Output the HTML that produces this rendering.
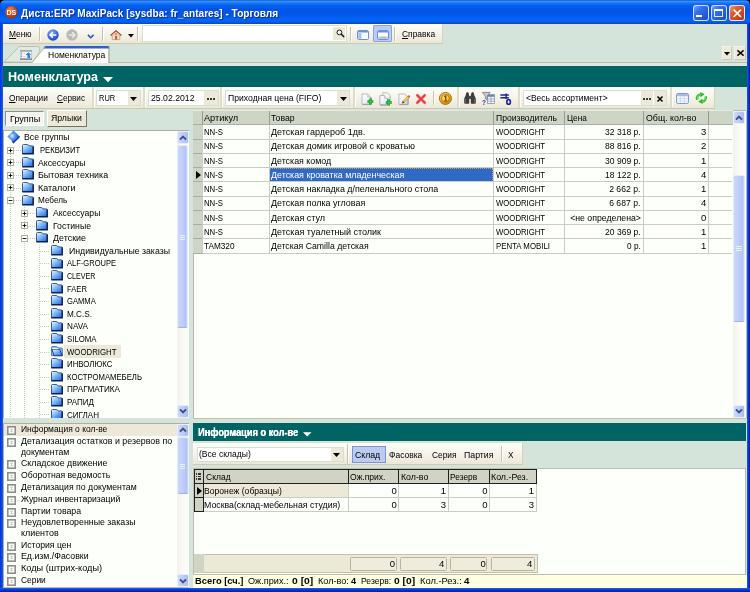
<!DOCTYPE html>
<html><head><meta charset="utf-8"><title>Диста:ERP MaxiPack</title><style>
html,body{margin:0;padding:0;}
body{width:750px;height:592px;overflow:hidden;position:relative;background:#d5e4da;font-family:"Liberation Sans",sans-serif;}
.a{position:absolute;box-sizing:border-box;}
.t{white-space:nowrap;line-height:1.15;}
svg{position:absolute;overflow:visible;}
#root{position:absolute;left:0;top:0;width:750px;height:592px;will-change:transform;}
</style></head><body>
<div id="root">
<svg width="0" height="0" style="left:0;top:0"><defs>
<radialGradient id="og" cx="40%" cy="30%" r="70%"><stop offset="0" stop-color="#f08848"/><stop offset="0.55" stop-color="#d04c18"/><stop offset="1" stop-color="#a02c06"/></radialGradient>
<radialGradient id="bg1" cx="40%" cy="30%" r="75%"><stop offset="0" stop-color="#8eb0f6"/><stop offset="0.7" stop-color="#2f5fd8"/><stop offset="1" stop-color="#1d46b8"/></radialGradient>
<radialGradient id="cg" cx="40%" cy="35%" r="70%"><stop offset="0" stop-color="#ffe680"/><stop offset="0.7" stop-color="#f0b020"/><stop offset="1" stop-color="#c88408"/></radialGradient>
<linearGradient id="fg" x1="0" y1="0" x2="0.9" y2="1"><stop offset="0" stop-color="#f4faff"/><stop offset="0.3" stop-color="#a8d2fd"/><stop offset="0.65" stop-color="#5a9cf2"/><stop offset="1" stop-color="#2a68d8"/></linearGradient>
<radialGradient id="dg" cx="38%" cy="45%" r="60%"><stop offset="0" stop-color="#e4f0ff"/><stop offset="0.35" stop-color="#6aa4f8"/><stop offset="0.75" stop-color="#2c6cec"/><stop offset="1" stop-color="#1c4cd0"/></radialGradient>
</defs></svg>
<div class="a" style="left:0px;top:0px;width:750px;height:8px;background:#000;"></div>
<div class="a" style="left:0px;top:0px;width:750px;height:24px;background:linear-gradient(#0a57d8 0%,#3a90fb 6%,#1a78f8 12%,#0462ee 22%,#0255e4 40%,#0257ea 60%,#0462f6 78%,#0563f4 88%,#0353d8 96%,#0347c0 100%);border-radius:5px 5px 0 0;"></div>
<div class="a" style="left:0px;top:23px;width:3px;height:565.5px;background:linear-gradient(90deg,#0831d9,#0a4be6 60%,#1660ee);"></div>
<div class="a" style="left:747px;top:23px;width:3px;height:565.5px;background:linear-gradient(90deg,#1a5aec,#0a3ee0 40%,#0526c4 75%,#001ea0);"></div>
<div class="a" style="left:0px;top:588.3px;width:750px;height:3.7px;background:linear-gradient(#2464f0,#0a3ee0 35%,#0526c4 80%,#001ea0);"></div>
<svg style="left:4.9px;top:6.3px" width="12.7" height="12.7" viewBox="0 0 13 13"><circle cx="6.5" cy="6.5" r="6.4" fill="url(#og)"/><text x="6.5" y="9.1" font-family="Liberation Sans" font-weight="bold" font-size="7.2" fill="#fff" text-anchor="middle">DS</text></svg>
<div class="a t" style="left:20.5px;top:7.4px;font-size:10.6px;color:#fff;font-weight:bold;text-shadow:1px 1px 1px #0a2a8a;transform:scaleX(0.953);transform-origin:0 0;">Диста:ERP MaxiPack [sysdba: fr_antares] - Торговля</div>
<div class="a" style="left:692.5px;top:5px;width:16.5px;height:16px;background:linear-gradient(135deg,#7aa4f8 0%,#3a72ee 30%,#2860e4 60%,#1c4cd0 100%);border:1px solid rgba(255,255,255,0.8);border-radius:3px;"></div>
<div class="a" style="left:696.3px;top:15px;width:6px;height:2.3px;background:#fff;"></div>
<div class="a" style="left:710.5px;top:5px;width:16.5px;height:16px;background:linear-gradient(135deg,#7aa4f8 0%,#3a72ee 30%,#2860e4 60%,#1c4cd0 100%);border:1px solid rgba(255,255,255,0.8);border-radius:3px;"></div>
<div class="a" style="left:714.3px;top:9px;width:9px;height:8.4px;border:1px solid rgba(255,255,255,0.85);border-top:2.4px solid #fff;"></div>
<div class="a" style="left:728.5px;top:5px;width:16.5px;height:16px;background:linear-gradient(135deg,#f0a088 0%,#e0603a 30%,#d24a20 60%,#b83510 100%);border:1px solid rgba(255,255,255,0.8);border-radius:3px;"></div>
<svg style="left:732.6px;top:8.9px" width="8.6" height="8.6" viewBox="0 0 8.6 8.6"><path d="M0.6 0.6L8 8M8 0.6L0.6 8" stroke="#fff" stroke-width="1.6"/></svg>
<div class="a" style="left:3px;top:24px;width:439.7px;height:20px;background:linear-gradient(#fdfdf9 0%,#f6f4ea 50%,#ebe8d7 100%);border-bottom:1px solid #cfc9ae;border-right:1px solid #d8d2bc;"></div>
<div class="a t" style="left:9px;top:29.1px;font-size:9.5px;transform:scaleX(0.880);transform-origin:0 0;"><u>М</u>еню</div>
<div class="a" style="left:39px;top:27px;width:1px;height:14px;background:#c5c2b0;"></div>
<div class="a" style="left:40px;top:27px;width:1px;height:14px;background:#fff;"></div>
<svg style="left:46.8px;top:29px" width="12" height="12" viewBox="0 0 12 12"><circle cx="6" cy="6" r="5.7" fill="url(#bg1)"/><path d="M9.3 6H3.4M5.8 3.3L3.1 6L5.8 8.7" stroke="#fff" stroke-width="1.6" fill="none"/></svg>
<svg style="left:65.6px;top:29px" width="12" height="12" viewBox="0 0 12 12"><circle cx="6" cy="6" r="5.7" fill="#b9b9b6"/><path d="M2.7 6H8.6M6.2 3.3L8.9 6L6.2 8.7" stroke="#e8e8e4" stroke-width="1.6" fill="none"/></svg>
<svg style="left:86.6px;top:33.6px" width="8" height="5" viewBox="0 0 8 5"><path d="M0.9 0.9L3.7 3.7L6.5 0.9" stroke="#2c50c8" stroke-width="1.6" fill="none"/></svg>
<div class="a" style="left:102px;top:27px;width:1px;height:14px;background:#c5c2b0;"></div>
<div class="a" style="left:103px;top:27px;width:1px;height:14px;background:#fff;"></div>
<svg style="left:109.6px;top:30px" width="12" height="10" viewBox="0 0 12 10"><path d="M2.2 4.6H9.8V9.6H2.2Z" fill="#f2dcc4" stroke="#b08868" stroke-width="0.6"/><path d="M0.6 5.4L6 0.7L11.4 5.4" fill="#e4c09c" stroke="#8c5434" stroke-width="1.3" stroke-linejoin="round"/><path d="M2 4.9L6 1.6L10 4.9Z" fill="#ecd0b0"/><rect x="5" y="6" width="2.2" height="3.6" fill="#d0602c"/><rect x="5.3" y="3.2" width="1.4" height="1.6" fill="#a87858"/></svg>
<svg style="left:128px;top:34.2px" width="6" height="3.4" viewBox="0 0 6 3.4"><path d="M0 0H6L3 3.4Z" fill="#000"/></svg>
<div class="a" style="left:137px;top:27px;width:1px;height:14px;background:#c5c2b0;"></div>
<div class="a" style="left:138px;top:27px;width:1px;height:14px;background:#fff;"></div>
<div class="a" style="left:141.6px;top:25.2px;width:205.8px;height:16.4px;background:#fff;border:1.6px solid #d4e1d7;"></div>
<div class="a" style="left:333.2px;top:26.9px;width:12.3px;height:13px;background:#ece9d8;"></div>
<svg style="left:335.6px;top:29.3px" width="10" height="10" viewBox="0 0 10 10"><circle cx="3.4" cy="3.4" r="2.4" fill="#f4f5f0" stroke="#1a1a1a" stroke-width="1"/><path d="M5.3 5.3L7.8 7.6" stroke="#1a1a1a" stroke-width="1.5" stroke-linecap="round"/></svg>
<div class="a" style="left:350px;top:27px;width:1px;height:14px;background:#c5c2b0;"></div>
<div class="a" style="left:351px;top:27px;width:1px;height:14px;background:#fff;"></div>
<svg style="left:357px;top:29.5px" width="12" height="10" viewBox="0 0 12 10"><rect x="0.5" y="0.5" width="11" height="9" rx="1.2" fill="#fafcff" stroke="#6c90d8" stroke-width="1"/><path d="M1 2.4V1.6Q1 1 1.6 1H10.4Q11 1 11 1.6V2.4Z" fill="#5c94e4"/><rect x="1" y="2.4" width="3.6" height="6.6" fill="#c4d8f8"/><path d="M1.6 4H4M1.6 5.8H4M1.6 7.6H4" stroke="#7c9cd0" stroke-width="0.7"/></svg>
<div class="a" style="left:372.8px;top:25.3px;width:19px;height:17px;background:#bccbf2;border:1px solid #8aa4e0;border-radius:1px;"></div>
<svg style="left:376.6px;top:29.5px" width="12" height="10" viewBox="0 0 12 10"><rect x="0.5" y="0.5" width="11" height="9" rx="1.2" fill="#fafcff" stroke="#6c90d8" stroke-width="1"/><path d="M1 2.4V1.6Q1 1 1.6 1H10.4Q11 1 11 1.6V2.4Z" fill="#5c94e4"/><rect x="1" y="6.4" width="10" height="2.6" fill="#ccd0d8"/><path d="M3 7.7H9" stroke="#9aa0ac" stroke-width="0.7"/></svg>
<div class="a" style="left:394px;top:27px;width:1px;height:14px;background:#c5c2b0;"></div>
<div class="a" style="left:395px;top:27px;width:1px;height:14px;background:#fff;"></div>
<div class="a t" style="left:402.1px;top:29.1px;font-size:9.5px;transform:scaleX(0.887);transform-origin:0 0;"><u>С</u>правка</div>
<div class="a" style="left:3px;top:61.9px;width:744px;height:0.9px;background:#bfbbaa;"></div>
<div class="a" style="left:3px;top:63px;width:744px;height:3px;background:#dce9e0;"></div>
<svg style="left:4px;top:46px" width="40" height="17" viewBox="0 0 40 17"><path d="M0 16.1L14.6 1.3Q15.4 0.5 16.5 0.5H33.5Q35.7 0.5 35.7 2.7V6L28.3 16.1Z" fill="#dfeae2" stroke="#b6b29e" stroke-width="0.8"/></svg>
<svg style="left:20px;top:50px" width="12" height="10" viewBox="0 0 12 10"><rect x="0.3" y="0.3" width="11.4" height="9.4" fill="#f6f6f6" stroke="#b4b4b4" stroke-width="0.6"/><rect x="0" y="0" width="12" height="1.7" fill="#a6a6a6"/><rect x="0" y="8.3" width="12" height="1.7" fill="#8c8c8c"/><circle cx="1.6" cy="3" r="0.65" fill="#40b850"/><circle cx="1.6" cy="4.8" r="0.65" fill="#e06060"/><circle cx="1.6" cy="6.6" r="0.65" fill="#4888f0"/><path d="M3.4 3.2H5.4M3.4 6.6H5.4" stroke="#c0c0c0" stroke-width="0.7"/><path d="M5.6 4.8L8.4 2.3L11 4.6L9.8 5.2L10.4 8H7.4L7.6 5.6Z" fill="#2484e4"/></svg>
<svg style="left:32px;top:46px" width="80" height="17" viewBox="0 0 80 17"><path d="M0 17L13.5 0.5H76.5V17Z" fill="#fdfefa"/><path d="M13 0H77V2.6H11Z" fill="#2e5fd0"/><path d="M0 16.6L13.5 0.5" stroke="#b9b59c" stroke-width="0.8" fill="none"/><path d="M77 0V17" stroke="#9c9a88" stroke-width="1"/></svg>
<div class="a t" style="left:47.6px;top:50.0px;font-size:9.4px;transform:scaleX(0.912);transform-origin:0 0;">Номенклатура</div>
<div class="a" style="left:721.7px;top:46.3px;width:10.2px;height:13.4px;background:#ece9d8;border:1px solid #f6f4ea;border-right-color:#cfc9b2;border-bottom-color:#cfc9b2;"></div>
<svg style="left:723.7px;top:52px" width="6" height="3.4" viewBox="0 0 6 3.4"><path d="M0 0H6L3 3.4Z" fill="#000"/></svg>
<div class="a" style="left:734px;top:46.3px;width:12.4px;height:13.4px;background:#ece9d8;border:1px solid #f6f4ea;border-right-color:#cfc9b2;border-bottom-color:#cfc9b2;"></div>
<svg style="left:737px;top:50.2px" width="7" height="6" viewBox="0 0 7 6"><path d="M0.4 0.4L6.6 5.6M6.6 0.4L0.4 5.6" stroke="#000" stroke-width="1.4"/></svg>
<div class="a" style="left:3px;top:65.5px;width:744px;height:21px;background:#006464;"></div>
<div class="a t" style="left:8.3px;top:68.6px;font-size:13.2px;color:#fff;font-weight:bold;transform:scaleX(0.954);transform-origin:0 0;">Номенклатура</div>
<svg style="left:102.5px;top:76.5px" width="10" height="5.5" viewBox="0 0 10 5.5"><path d="M0 0H10L5 5.2Z" fill="#fff"/></svg>
<div class="a" style="left:3px;top:86.5px;width:712px;height:22.3px;background:linear-gradient(#fdfdf9 0%,#f6f4ea 50%,#ebe8d7 100%);border-bottom:1px solid #cfc9ae;border-right:1px solid #d8d2bc;"></div>
<div class="a t" style="left:9.2px;top:93.1px;font-size:9.5px;transform:scaleX(0.873);transform-origin:0 0;"><u>О</u>перации</div>
<div class="a t" style="left:57.4px;top:93.1px;font-size:9.5px;transform:scaleX(0.860);transform-origin:0 0;"><u>С</u>ервис</div>
<div class="a" style="left:91.8px;top:87px;width:2px;height:21px;background:#e0dcc8;"></div>
<div class="a" style="left:93.8px;top:88px;width:1px;height:19px;background:#fff;"></div>
<div class="a" style="left:96.3px;top:90.4px;width:44.3px;height:15.4px;background:#fff;border:1.4px solid #d3e0d5;"></div>
<div class="a" style="left:127.6px;top:91.4px;width:12px;height:13.4px;background:#ece9d8;"></div>
<svg style="left:130.1px;top:96.60000000000001px" width="7" height="4" viewBox="0 0 7 4"><path d="M0 0H7L3.5 4Z" fill="#000"/></svg>
<div class="a t" style="left:98.5px;top:92.65px;font-size:9.5px;transform:scaleX(0.787);transform-origin:0 0;">RUR</div>
<div class="a" style="left:142.8px;top:87px;width:2px;height:21px;background:#e0dcc8;"></div>
<div class="a" style="left:144.8px;top:88px;width:1px;height:19px;background:#fff;"></div>
<div class="a" style="left:148px;top:90.4px;width:71px;height:15.4px;background:#fff;border:1.4px solid #d3e0d5;"></div>
<div class="a t" style="left:150.6px;top:92.89999999999999px;font-size:9.5px;transform:scaleX(0.915);transform-origin:0 0;">25.02.2012</div>
<div class="a" style="left:204px;top:91.4px;width:14px;height:13.4px;background:#ece9d8;"></div>
<div class="a" style="left:207.0px;top:97.6px;width:2px;height:2px;background:#000;border-radius:50%;"></div>
<div class="a" style="left:209.9px;top:97.6px;width:2px;height:2px;background:#000;border-radius:50%;"></div>
<div class="a" style="left:212.8px;top:97.6px;width:2px;height:2px;background:#000;border-radius:50%;"></div>
<div class="a" style="left:220px;top:87px;width:2px;height:21px;background:#e0dcc8;"></div>
<div class="a" style="left:222px;top:88px;width:1px;height:19px;background:#fff;"></div>
<div class="a" style="left:225.3px;top:90.4px;width:125px;height:15.4px;background:#fff;border:1.4px solid #d3e0d5;"></div>
<div class="a" style="left:337.3px;top:91.4px;width:12px;height:13.4px;background:#ece9d8;"></div>
<svg style="left:339.8px;top:96.60000000000001px" width="7" height="4" viewBox="0 0 7 4"><path d="M0 0H7L3.5 4Z" fill="#000"/></svg>
<div class="a t" style="left:227.5px;top:92.65px;font-size:9.5px;transform:scaleX(0.908);transform-origin:0 0;">Приходная цена (FIFO)</div>
<div class="a" style="left:353px;top:87px;width:2px;height:21px;background:#e0dcc8;"></div>
<div class="a" style="left:355px;top:88px;width:1px;height:19px;background:#fff;"></div>
<svg style="left:361px;top:92.5px" width="13" height="13" viewBox="0 0 13 13"><defs><linearGradient id="pgr" x1="0" y1="0" x2="1" y2="1"><stop offset="0" stop-color="#ffffff"/><stop offset="0.6" stop-color="#eef1f5"/><stop offset="1" stop-color="#c8ced8"/></linearGradient></defs><path d="M1 1H6.8L9.8 4V11.2H1Z" fill="url(#pgr)" stroke="#a4acb8" stroke-width="0.8"/><path d="M6.8 1V4H9.8" fill="#e4e8ee" stroke="#a4acb8" stroke-width="0.6"/><path d="M10.2 4.5V11.6H1.5" fill="none" stroke="#8890a0" stroke-width="0.7"/><path d="M6.5 8.5H12.3M9.4 5.6V11.4" stroke="#138a22" stroke-width="2.4"/><path d="M6.9 8.5H11.9M9.4 6.0V11.0" stroke="#30c840" stroke-width="1.3"/></svg>
<svg style="left:378.5px;top:91.5px" width="13" height="14" viewBox="0 0 13 14"><path d="M3.8 0.8H8.4L11.2 3.6V9.5H3.8Z" fill="url(#pgr)" stroke="#a4acb8" stroke-width="0.8"/><path d="M0.9 3.6H5.6L8.5 6.5V12.8H0.9Z" fill="url(#pgr)" stroke="#98a0ac" stroke-width="0.8"/><path d="M5.6 3.6V6.5H8.5" fill="#e4e8ee" stroke="#a4acb8" stroke-width="0.6"/><path d="M8.9 7V13.2H1.4" fill="none" stroke="#8890a0" stroke-width="0.7"/><path d="M6.9 10.5H12.700000000000001M9.8 7.6V13.4" stroke="#138a22" stroke-width="2.4"/><path d="M7.300000000000001 10.5H12.3M9.8 8.0V13.0" stroke="#30c840" stroke-width="1.3"/></svg>
<svg style="left:397.5px;top:92.5px" width="13" height="13" viewBox="0 0 13 13"><path d="M0.9 1H6.8L9.8 4V11.2H0.9Z" fill="url(#pgr)" stroke="#a4acb8" stroke-width="0.8"/><path d="M10.2 4.5V11.6H1.4" fill="none" stroke="#8890a0" stroke-width="0.7"/><path d="M4.2 10.2L4.9 7.9L9.6 3.2L11.2 4.8L6.5 9.5Z" fill="#f2cc4a" stroke="#a8842c" stroke-width="0.5"/><path d="M9.6 3.2L10.4 2.4Q11 2 11.6 2.6L12 3Q12.4 3.6 12 4L11.2 4.8Z" fill="#e05048"/><path d="M4.2 10.2L4.9 7.9L6.5 9.5Z" fill="#3a3020"/></svg>
<svg style="left:416px;top:93.5px" width="10" height="10" viewBox="0 0 10 10"><path d="M1.3 1.3L8.7 8.7M8.7 1.3L1.3 8.7" stroke="#f08080" stroke-width="3" stroke-linecap="round"/><path d="M1.3 1.3L8.7 8.7M8.7 1.3L1.3 8.7" stroke="#e63c40" stroke-width="1.9" stroke-linecap="round"/></svg>
<div class="a" style="left:432.7px;top:91px;width:1px;height:14px;background:#c5c2b0;"></div>
<div class="a" style="left:433.7px;top:91px;width:1px;height:14px;background:#fff;"></div>
<svg style="left:439px;top:91.8px" width="13" height="13" viewBox="0 0 13 13"><circle cx="6.4" cy="6.4" r="6" fill="url(#cg)" stroke="#9a6204" stroke-width="0.9"/><circle cx="6.4" cy="6.4" r="4" fill="none" stroke="#a06808" stroke-width="0.8"/><path d="M5.2 4.9L6.7 3.9V8.9M5.2 9H8.2" stroke="#7a4802" stroke-width="1.2" fill="none"/></svg>
<div class="a" style="left:457.2px;top:87px;width:2px;height:21px;background:#e0dcc8;"></div>
<div class="a" style="left:459.2px;top:88px;width:1px;height:19px;background:#fff;"></div>
<svg style="left:463.6px;top:92px" width="12" height="12" viewBox="0 0 12 12"><path d="M1.6 3.4L2.2 0.9Q2.4 0.3 3 0.3H3.9Q4.5 0.3 4.6 0.9L5.2 3.4V11Q5.2 11.8 4.4 11.8H1Q0.2 11.8 0.2 11V6.5Z" fill="#3c3c3c"/><path d="M10.4 3.4L9.8 0.9Q9.6 0.3 9 0.3H8.1Q7.5 0.3 7.4 0.9L6.8 3.4V11Q6.8 11.8 7.6 11.8H11Q11.8 11.8 11.8 11V6.5Z" fill="#3c3c3c"/><rect x="4.8" y="4" width="2.4" height="3" fill="#4a4a4a"/><path d="M1.5 6.5V11M10.5 6.5V11" stroke="#6c6c6c" stroke-width="0.8"/></svg>
<svg style="left:481.5px;top:92px" width="13" height="13" viewBox="0 0 13 13"><rect x="5.4" y="2.4" width="7.2" height="9" fill="#f6f8fc" stroke="#7a86a0" stroke-width="0.7"/><rect x="5.8" y="2.8" width="6.4" height="2" fill="#5a86d8"/><path d="M5.8 7H12.2M5.8 9.2H12.2M9 4.8V11" stroke="#8a96b0" stroke-width="0.7"/><path d="M0.3 0.4H8.2L5.2 4V8L3.3 6.8V4Z" fill="#c4c8d0" stroke="#6a6e78" stroke-width="0.7"/><text x="0" y="12.8" font-family="Liberation Sans" font-weight="bold" font-size="6.4" fill="#1a2cb0">?</text></svg>
<svg style="left:500px;top:92.5px" width="12" height="12" viewBox="0 0 12 12"><path d="M0.4 2.1H8.8M0.4 4.8H8.8" stroke="#1c20a8" stroke-width="1.5"/><path d="M6.1 0.6V6" stroke="#1c20a8" stroke-width="1.4"/><ellipse cx="8.6" cy="8.9" rx="1.8" ry="2.4" fill="none" stroke="#1c20a8" stroke-width="1.6"/></svg>
<div class="a" style="left:517.5px;top:87px;width:2px;height:21px;background:#e0dcc8;"></div>
<div class="a" style="left:519.5px;top:88px;width:1px;height:19px;background:#fff;"></div>
<div class="a" style="left:522.5px;top:90.4px;width:144.5px;height:15.4px;background:#fff;border:1.4px solid #d3e0d5;"></div>
<div class="a t" style="left:526px;top:92.89999999999999px;font-size:9.5px;transform:scaleX(0.893);transform-origin:0 0;">&lt;Весь ассортимент&gt;</div>
<div class="a" style="left:640.5px;top:91.4px;width:12px;height:13.4px;background:#ece9d8;"></div>
<div class="a" style="left:643.0px;top:97.6px;width:2px;height:2px;background:#000;border-radius:50%;"></div>
<div class="a" style="left:645.9px;top:97.6px;width:2px;height:2px;background:#000;border-radius:50%;"></div>
<div class="a" style="left:648.8px;top:97.6px;width:2px;height:2px;background:#000;border-radius:50%;"></div>
<div class="a" style="left:654.3px;top:91.4px;width:11.5px;height:13.4px;background:#ece9d8;"></div>
<svg style="left:657px;top:96px" width="6" height="6" viewBox="0 0 6 6"><path d="M0.5 0.5L5.5 5.5M5.5 0.5L0.5 5.5" stroke="#000" stroke-width="1.5"/></svg>
<div class="a" style="left:669.5px;top:87px;width:2px;height:21px;background:#e0dcc8;"></div>
<div class="a" style="left:671.5px;top:88px;width:1px;height:19px;background:#fff;"></div>
<svg style="left:676.3px;top:93px" width="13" height="11" viewBox="0 0 13 11"><rect x="0.5" y="0.5" width="12" height="10" rx="1.6" fill="#f4f7fd" stroke="#7c9cdc" stroke-width="1"/><path d="M1 3.2V2Q1 1 2 1H11Q12 1 12 2V3.2Z" fill="#a4bcec"/><path d="M1.2 5.6H11.8M1.2 8H11.8M4.4 3.4V10M8.4 3.4V10" stroke="#ccd4e4" stroke-width="0.7"/></svg>
<svg style="left:694.8px;top:92.4px" width="13" height="12" viewBox="0 0 13 12"><path d="M2.3 7.6A3.9 3.9 0 0 1 6 2.4" stroke="#26bc2c" stroke-width="2.5" fill="none"/><path d="M5.2 0L9.6 2.3L5.6 5.2Z" fill="#26bc2c"/><path d="M10.6 4.4A3.9 3.9 0 0 1 6.9 9.6" stroke="#26bc2c" stroke-width="2.5" fill="none"/><path d="M7.7 12L3.3 9.7L7.3 6.8Z" fill="#26bc2c"/><path d="M2.6 6.8A3.4 3.4 0 0 1 5.6 2.6M10.3 5.2A3.4 3.4 0 0 1 7.3 9.4" stroke="#8ef08e" stroke-width="0.8" fill="none"/></svg>
<div class="a" style="left:5px;top:110.5px;width:38.5px;height:15.8px;background:#f4f5ee;border:1.3px solid #8e8e82;border-right-color:#fff;border-bottom-color:#fff;"></div>
<div class="a t" style="left:9.7px;top:113.5px;font-size:9.5px;transform:scaleX(0.954);transform-origin:0 0;">Группы</div>
<div class="a" style="left:46.5px;top:110.2px;width:40.3px;height:16.6px;background:#ece9d8;border:1.3px solid #fff;border-right-color:#747264;border-bottom-color:#747264;"></div>
<div class="a t" style="left:51px;top:113.1px;font-size:9.5px;transform:scaleX(0.915);transform-origin:0 0;">Ярлыки</div>
<div class="a" style="left:3px;top:130px;width:186px;height:288px;background:#fdfffa;border-top:1px solid #b2ae9e;border-left:1px solid #b2ae9e;"></div>
<svg style="left:7px;top:130.2px" width="13" height="13" viewBox="0 0 13 13"><path d="M6.5 0.4L12.6 6.5L6.5 12.6L0.4 6.5Z" fill="url(#dg)"/><path d="M12.6 6.5L6.5 12.6L5.4 11.5" fill="none" stroke="#10309c" stroke-width="1.2"/></svg>
<div class="a t" style="left:23.7px;top:132.4px;font-size:9.5px;transform:scaleX(0.921);transform-origin:0 0;">Все группы</div>
<div class="a" style="left:10px;top:149.9px;width:1px;height:268.1px;background:repeating-linear-gradient(180deg,#cacac0 0 1px,transparent 1px 2px);"></div>
<div class="a" style="left:14px;top:150px;width:8px;height:1px;background:repeating-linear-gradient(90deg,#cacac0 0 1px,transparent 1px 2px);"></div>
<svg style="left:7.0px;top:146.6px" width="7" height="7" viewBox="0 0 7 7"><rect x="0.5" y="0.5" width="6" height="6" fill="#fff" stroke="#b4b09c" stroke-width="1"/><path d="M1.6 3.5H5.4" stroke="#000" stroke-width="0.9"/><path d="M3.5 1.6V5.4" stroke="#000" stroke-width="0.9"/></svg>
<svg style="left:22px;top:144.20000000000002px" width="12" height="11" viewBox="0 0 12 11"><path d="M0.5 1.6Q0.5 0.5 1.6 0.5H5.2Q6.4 0.5 7 1.9H10.4Q11.4 1.9 11.4 2.9V9.6H0.5Z" fill="url(#fg)"/><path d="M0.5 9.6V1.6Q0.5 0.5 1.6 0.5H5.2Q6.4 0.5 7 1.9H10.4Q11.4 1.9 11.4 2.9" fill="none" stroke="#284890" stroke-width="0.9"/><path d="M11.2 2.4V9.8H0.3" fill="none" stroke="#0e2050" stroke-width="1.5"/></svg>
<div class="a t" style="left:40.1px;top:145.0px;font-size:9.5px;transform:scaleX(0.806);transform-origin:0 0;">РЕКВИЗИТ</div>
<div class="a" style="left:14px;top:162px;width:8px;height:1px;background:repeating-linear-gradient(90deg,#cacac0 0 1px,transparent 1px 2px);"></div>
<svg style="left:7.0px;top:159.2px" width="7" height="7" viewBox="0 0 7 7"><rect x="0.5" y="0.5" width="6" height="6" fill="#fff" stroke="#b4b09c" stroke-width="1"/><path d="M1.6 3.5H5.4" stroke="#000" stroke-width="0.9"/><path d="M3.5 1.6V5.4" stroke="#000" stroke-width="0.9"/></svg>
<svg style="left:22px;top:156.8px" width="12" height="11" viewBox="0 0 12 11"><path d="M0.5 1.6Q0.5 0.5 1.6 0.5H5.2Q6.4 0.5 7 1.9H10.4Q11.4 1.9 11.4 2.9V9.6H0.5Z" fill="url(#fg)"/><path d="M0.5 9.6V1.6Q0.5 0.5 1.6 0.5H5.2Q6.4 0.5 7 1.9H10.4Q11.4 1.9 11.4 2.9" fill="none" stroke="#284890" stroke-width="0.9"/><path d="M11.2 2.4V9.8H0.3" fill="none" stroke="#0e2050" stroke-width="1.5"/></svg>
<div class="a t" style="left:38.2px;top:157.6px;font-size:9.5px;transform:scaleX(0.912);transform-origin:0 0;">Аксессуары</div>
<div class="a" style="left:14px;top:175px;width:8px;height:1px;background:repeating-linear-gradient(90deg,#cacac0 0 1px,transparent 1px 2px);"></div>
<svg style="left:7.0px;top:171.8px" width="7" height="7" viewBox="0 0 7 7"><rect x="0.5" y="0.5" width="6" height="6" fill="#fff" stroke="#b4b09c" stroke-width="1"/><path d="M1.6 3.5H5.4" stroke="#000" stroke-width="0.9"/><path d="M3.5 1.6V5.4" stroke="#000" stroke-width="0.9"/></svg>
<svg style="left:22px;top:169.40000000000003px" width="12" height="11" viewBox="0 0 12 11"><path d="M0.5 1.6Q0.5 0.5 1.6 0.5H5.2Q6.4 0.5 7 1.9H10.4Q11.4 1.9 11.4 2.9V9.6H0.5Z" fill="url(#fg)"/><path d="M0.5 9.6V1.6Q0.5 0.5 1.6 0.5H5.2Q6.4 0.5 7 1.9H10.4Q11.4 1.9 11.4 2.9" fill="none" stroke="#284890" stroke-width="0.9"/><path d="M11.2 2.4V9.8H0.3" fill="none" stroke="#0e2050" stroke-width="1.5"/></svg>
<div class="a t" style="left:38.2px;top:170.20000000000002px;font-size:9.5px;transform:scaleX(0.936);transform-origin:0 0;">Бытовая техника</div>
<div class="a" style="left:14px;top:188px;width:8px;height:1px;background:repeating-linear-gradient(90deg,#cacac0 0 1px,transparent 1px 2px);"></div>
<svg style="left:7.0px;top:184.4px" width="7" height="7" viewBox="0 0 7 7"><rect x="0.5" y="0.5" width="6" height="6" fill="#fff" stroke="#b4b09c" stroke-width="1"/><path d="M1.6 3.5H5.4" stroke="#000" stroke-width="0.9"/><path d="M3.5 1.6V5.4" stroke="#000" stroke-width="0.9"/></svg>
<svg style="left:22px;top:182.00000000000003px" width="12" height="11" viewBox="0 0 12 11"><path d="M0.5 1.6Q0.5 0.5 1.6 0.5H5.2Q6.4 0.5 7 1.9H10.4Q11.4 1.9 11.4 2.9V9.6H0.5Z" fill="url(#fg)"/><path d="M0.5 9.6V1.6Q0.5 0.5 1.6 0.5H5.2Q6.4 0.5 7 1.9H10.4Q11.4 1.9 11.4 2.9" fill="none" stroke="#284890" stroke-width="0.9"/><path d="M11.2 2.4V9.8H0.3" fill="none" stroke="#0e2050" stroke-width="1.5"/></svg>
<div class="a t" style="left:38.2px;top:182.8px;font-size:9.5px;transform:scaleX(0.941);transform-origin:0 0;">Каталоги</div>
<div class="a" style="left:14px;top:200px;width:8px;height:1px;background:repeating-linear-gradient(90deg,#cacac0 0 1px,transparent 1px 2px);"></div>
<svg style="left:7.0px;top:197.0px" width="7" height="7" viewBox="0 0 7 7"><rect x="0.5" y="0.5" width="6" height="6" fill="#fff" stroke="#b4b09c" stroke-width="1"/><path d="M1.6 3.5H5.4" stroke="#000" stroke-width="0.9"/></svg>
<svg style="left:22px;top:194.60000000000002px" width="12" height="11" viewBox="0 0 12 11"><path d="M0.5 1.6Q0.5 0.5 1.6 0.5H5.2Q6.4 0.5 7 1.9H10.4Q11.4 1.9 11.4 2.9V9.6H0.5Z" fill="url(#fg)"/><path d="M0.5 9.6V1.6Q0.5 0.5 1.6 0.5H5.2Q6.4 0.5 7 1.9H10.4Q11.4 1.9 11.4 2.9" fill="none" stroke="#284890" stroke-width="0.9"/><path d="M11.2 2.4V9.8H0.3" fill="none" stroke="#0e2050" stroke-width="1.5"/></svg>
<div class="a t" style="left:38.2px;top:195.4px;font-size:9.5px;transform:scaleX(0.859);transform-origin:0 0;">Мебель</div>
<div class="a" style="left:24px;top:206.9px;width:1px;height:211.1px;background:repeating-linear-gradient(180deg,#cacac0 0 1px,transparent 1px 2px);"></div>
<div class="a" style="left:28px;top:213px;width:8px;height:1px;background:repeating-linear-gradient(90deg,#cacac0 0 1px,transparent 1px 2px);"></div>
<svg style="left:21.3px;top:209.6px" width="7" height="7" viewBox="0 0 7 7"><rect x="0.5" y="0.5" width="6" height="6" fill="#fff" stroke="#b4b09c" stroke-width="1"/><path d="M1.6 3.5H5.4" stroke="#000" stroke-width="0.9"/><path d="M3.5 1.6V5.4" stroke="#000" stroke-width="0.9"/></svg>
<svg style="left:36px;top:207.20000000000002px" width="12" height="11" viewBox="0 0 12 11"><path d="M0.5 1.6Q0.5 0.5 1.6 0.5H5.2Q6.4 0.5 7 1.9H10.4Q11.4 1.9 11.4 2.9V9.6H0.5Z" fill="url(#fg)"/><path d="M0.5 9.6V1.6Q0.5 0.5 1.6 0.5H5.2Q6.4 0.5 7 1.9H10.4Q11.4 1.9 11.4 2.9" fill="none" stroke="#284890" stroke-width="0.9"/><path d="M11.2 2.4V9.8H0.3" fill="none" stroke="#0e2050" stroke-width="1.5"/></svg>
<div class="a t" style="left:53px;top:208.0px;font-size:9.5px;transform:scaleX(0.907);transform-origin:0 0;">Аксессуары</div>
<div class="a" style="left:28px;top:226px;width:8px;height:1px;background:repeating-linear-gradient(90deg,#cacac0 0 1px,transparent 1px 2px);"></div>
<svg style="left:21.3px;top:222.2px" width="7" height="7" viewBox="0 0 7 7"><rect x="0.5" y="0.5" width="6" height="6" fill="#fff" stroke="#b4b09c" stroke-width="1"/><path d="M1.6 3.5H5.4" stroke="#000" stroke-width="0.9"/><path d="M3.5 1.6V5.4" stroke="#000" stroke-width="0.9"/></svg>
<svg style="left:36px;top:219.8px" width="12" height="11" viewBox="0 0 12 11"><path d="M0.5 1.6Q0.5 0.5 1.6 0.5H5.2Q6.4 0.5 7 1.9H10.4Q11.4 1.9 11.4 2.9V9.6H0.5Z" fill="url(#fg)"/><path d="M0.5 9.6V1.6Q0.5 0.5 1.6 0.5H5.2Q6.4 0.5 7 1.9H10.4Q11.4 1.9 11.4 2.9" fill="none" stroke="#284890" stroke-width="0.9"/><path d="M11.2 2.4V9.8H0.3" fill="none" stroke="#0e2050" stroke-width="1.5"/></svg>
<div class="a t" style="left:53px;top:220.6px;font-size:9.5px;transform:scaleX(0.914);transform-origin:0 0;">Гостиные</div>
<div class="a" style="left:28px;top:238px;width:8px;height:1px;background:repeating-linear-gradient(90deg,#cacac0 0 1px,transparent 1px 2px);"></div>
<svg style="left:21.3px;top:234.8px" width="7" height="7" viewBox="0 0 7 7"><rect x="0.5" y="0.5" width="6" height="6" fill="#fff" stroke="#b4b09c" stroke-width="1"/><path d="M1.6 3.5H5.4" stroke="#000" stroke-width="0.9"/></svg>
<svg style="left:36px;top:232.40000000000003px" width="12" height="11" viewBox="0 0 12 11"><path d="M0.5 1.6Q0.5 0.5 1.6 0.5H5.2Q6.4 0.5 7 1.9H10.4Q11.4 1.9 11.4 2.9V9.6H0.5Z" fill="url(#fg)"/><path d="M0.5 9.6V1.6Q0.5 0.5 1.6 0.5H5.2Q6.4 0.5 7 1.9H10.4Q11.4 1.9 11.4 2.9" fill="none" stroke="#284890" stroke-width="0.9"/><path d="M11.2 2.4V9.8H0.3" fill="none" stroke="#0e2050" stroke-width="1.5"/></svg>
<div class="a t" style="left:53px;top:233.20000000000002px;font-size:9.5px;transform:scaleX(0.939);transform-origin:0 0;">Детские</div>
<div class="a" style="left:39px;top:244.7px;width:1px;height:173.3px;background:repeating-linear-gradient(180deg,#cacac0 0 1px,transparent 1px 2px);"></div>
<div class="a" style="left:40px;top:251px;width:10px;height:1px;background:repeating-linear-gradient(90deg,#cacac0 0 1px,transparent 1px 2px);"></div>
<svg style="left:50.5px;top:245.0px" width="12" height="11" viewBox="0 0 12 11"><path d="M0.5 1.6Q0.5 0.5 1.6 0.5H5.2Q6.4 0.5 7 1.9H10.4Q11.4 1.9 11.4 2.9V9.6H0.5Z" fill="url(#fg)"/><path d="M0.5 9.6V1.6Q0.5 0.5 1.6 0.5H5.2Q6.4 0.5 7 1.9H10.4Q11.4 1.9 11.4 2.9" fill="none" stroke="#284890" stroke-width="0.9"/><path d="M11.2 2.4V9.8H0.3" fill="none" stroke="#0e2050" stroke-width="1.5"/></svg>
<div class="a t" style="left:69px;top:245.79999999999998px;font-size:9.5px;transform:scaleX(0.921);transform-origin:0 0;">Индивидуальные заказы</div>
<div class="a" style="left:40px;top:263px;width:10px;height:1px;background:repeating-linear-gradient(90deg,#cacac0 0 1px,transparent 1px 2px);"></div>
<svg style="left:50.5px;top:257.6px" width="12" height="11" viewBox="0 0 12 11"><path d="M0.5 1.6Q0.5 0.5 1.6 0.5H5.2Q6.4 0.5 7 1.9H10.4Q11.4 1.9 11.4 2.9V9.6H0.5Z" fill="url(#fg)"/><path d="M0.5 9.6V1.6Q0.5 0.5 1.6 0.5H5.2Q6.4 0.5 7 1.9H10.4Q11.4 1.9 11.4 2.9" fill="none" stroke="#284890" stroke-width="0.9"/><path d="M11.2 2.4V9.8H0.3" fill="none" stroke="#0e2050" stroke-width="1.5"/></svg>
<div class="a t" style="left:67px;top:258.40000000000003px;font-size:9.5px;transform:scaleX(0.793);transform-origin:0 0;">ALF-GROUPE</div>
<div class="a" style="left:40px;top:276px;width:10px;height:1px;background:repeating-linear-gradient(90deg,#cacac0 0 1px,transparent 1px 2px);"></div>
<svg style="left:50.5px;top:270.2px" width="12" height="11" viewBox="0 0 12 11"><path d="M0.5 1.6Q0.5 0.5 1.6 0.5H5.2Q6.4 0.5 7 1.9H10.4Q11.4 1.9 11.4 2.9V9.6H0.5Z" fill="url(#fg)"/><path d="M0.5 9.6V1.6Q0.5 0.5 1.6 0.5H5.2Q6.4 0.5 7 1.9H10.4Q11.4 1.9 11.4 2.9" fill="none" stroke="#284890" stroke-width="0.9"/><path d="M11.2 2.4V9.8H0.3" fill="none" stroke="#0e2050" stroke-width="1.5"/></svg>
<div class="a t" style="left:67px;top:271.0px;font-size:9.5px;transform:scaleX(0.747);transform-origin:0 0;">CLEVER</div>
<div class="a" style="left:40px;top:288px;width:10px;height:1px;background:repeating-linear-gradient(90deg,#cacac0 0 1px,transparent 1px 2px);"></div>
<svg style="left:50.5px;top:282.8px" width="12" height="11" viewBox="0 0 12 11"><path d="M0.5 1.6Q0.5 0.5 1.6 0.5H5.2Q6.4 0.5 7 1.9H10.4Q11.4 1.9 11.4 2.9V9.6H0.5Z" fill="url(#fg)"/><path d="M0.5 9.6V1.6Q0.5 0.5 1.6 0.5H5.2Q6.4 0.5 7 1.9H10.4Q11.4 1.9 11.4 2.9" fill="none" stroke="#284890" stroke-width="0.9"/><path d="M11.2 2.4V9.8H0.3" fill="none" stroke="#0e2050" stroke-width="1.5"/></svg>
<div class="a t" style="left:67px;top:283.6px;font-size:9.5px;transform:scaleX(0.806);transform-origin:0 0;">FAER</div>
<div class="a" style="left:40px;top:301px;width:10px;height:1px;background:repeating-linear-gradient(90deg,#cacac0 0 1px,transparent 1px 2px);"></div>
<svg style="left:50.5px;top:295.40000000000003px" width="12" height="11" viewBox="0 0 12 11"><path d="M0.5 1.6Q0.5 0.5 1.6 0.5H5.2Q6.4 0.5 7 1.9H10.4Q11.4 1.9 11.4 2.9V9.6H0.5Z" fill="url(#fg)"/><path d="M0.5 9.6V1.6Q0.5 0.5 1.6 0.5H5.2Q6.4 0.5 7 1.9H10.4Q11.4 1.9 11.4 2.9" fill="none" stroke="#284890" stroke-width="0.9"/><path d="M11.2 2.4V9.8H0.3" fill="none" stroke="#0e2050" stroke-width="1.5"/></svg>
<div class="a t" style="left:67px;top:296.20000000000005px;font-size:9.5px;transform:scaleX(0.802);transform-origin:0 0;">GAMMA</div>
<div class="a" style="left:40px;top:314px;width:10px;height:1px;background:repeating-linear-gradient(90deg,#cacac0 0 1px,transparent 1px 2px);"></div>
<svg style="left:50.5px;top:308.00000000000006px" width="12" height="11" viewBox="0 0 12 11"><path d="M0.5 1.6Q0.5 0.5 1.6 0.5H5.2Q6.4 0.5 7 1.9H10.4Q11.4 1.9 11.4 2.9V9.6H0.5Z" fill="url(#fg)"/><path d="M0.5 9.6V1.6Q0.5 0.5 1.6 0.5H5.2Q6.4 0.5 7 1.9H10.4Q11.4 1.9 11.4 2.9" fill="none" stroke="#284890" stroke-width="0.9"/><path d="M11.2 2.4V9.8H0.3" fill="none" stroke="#0e2050" stroke-width="1.5"/></svg>
<div class="a t" style="left:67px;top:308.80000000000007px;font-size:9.5px;transform:scaleX(0.861);transform-origin:0 0;">M.C.S.</div>
<div class="a" style="left:40px;top:326px;width:10px;height:1px;background:repeating-linear-gradient(90deg,#cacac0 0 1px,transparent 1px 2px);"></div>
<svg style="left:50.5px;top:320.6px" width="12" height="11" viewBox="0 0 12 11"><path d="M0.5 1.6Q0.5 0.5 1.6 0.5H5.2Q6.4 0.5 7 1.9H10.4Q11.4 1.9 11.4 2.9V9.6H0.5Z" fill="url(#fg)"/><path d="M0.5 9.6V1.6Q0.5 0.5 1.6 0.5H5.2Q6.4 0.5 7 1.9H10.4Q11.4 1.9 11.4 2.9" fill="none" stroke="#284890" stroke-width="0.9"/><path d="M11.2 2.4V9.8H0.3" fill="none" stroke="#0e2050" stroke-width="1.5"/></svg>
<div class="a t" style="left:67px;top:321.40000000000003px;font-size:9.5px;transform:scaleX(0.858);transform-origin:0 0;">NAVA</div>
<div class="a" style="left:40px;top:339px;width:10px;height:1px;background:repeating-linear-gradient(90deg,#cacac0 0 1px,transparent 1px 2px);"></div>
<svg style="left:50.5px;top:333.2px" width="12" height="11" viewBox="0 0 12 11"><path d="M0.5 1.6Q0.5 0.5 1.6 0.5H5.2Q6.4 0.5 7 1.9H10.4Q11.4 1.9 11.4 2.9V9.6H0.5Z" fill="url(#fg)"/><path d="M0.5 9.6V1.6Q0.5 0.5 1.6 0.5H5.2Q6.4 0.5 7 1.9H10.4Q11.4 1.9 11.4 2.9" fill="none" stroke="#284890" stroke-width="0.9"/><path d="M11.2 2.4V9.8H0.3" fill="none" stroke="#0e2050" stroke-width="1.5"/></svg>
<div class="a t" style="left:67px;top:334.0px;font-size:9.5px;transform:scaleX(0.822);transform-origin:0 0;">SILOMA</div>
<div class="a" style="left:40px;top:352px;width:10px;height:1px;background:repeating-linear-gradient(90deg,#cacac0 0 1px,transparent 1px 2px);"></div>
<div class="a" style="left:64px;top:345.3px;width:56.5px;height:12.4px;background:#ece9d8;"></div>
<svg style="left:50.5px;top:345.8px" width="12" height="11" viewBox="0 0 12 11"><path d="M0.5 9.6V1.6Q0.5 0.5 1.6 0.5H5.2Q6.4 0.5 7 1.9H10.4Q11.4 1.9 11.4 2.9V9.6Z" fill="#8cbcf6" stroke="#3a64b4" stroke-width="0.8"/><path d="M1 3.2H8.6L11.4 9.8H3Z" fill="url(#fg)" stroke="#1c3468" stroke-width="0.9"/><path d="M1.2 2.6H7.4" stroke="#fff" stroke-width="1"/></svg>
<div class="a t" style="left:67px;top:346.6px;font-size:9.5px;transform:scaleX(0.821);transform-origin:0 0;">WOODRIGHT</div>
<div class="a" style="left:40px;top:364px;width:10px;height:1px;background:repeating-linear-gradient(90deg,#cacac0 0 1px,transparent 1px 2px);"></div>
<svg style="left:50.5px;top:358.40000000000003px" width="12" height="11" viewBox="0 0 12 11"><path d="M0.5 1.6Q0.5 0.5 1.6 0.5H5.2Q6.4 0.5 7 1.9H10.4Q11.4 1.9 11.4 2.9V9.6H0.5Z" fill="url(#fg)"/><path d="M0.5 9.6V1.6Q0.5 0.5 1.6 0.5H5.2Q6.4 0.5 7 1.9H10.4Q11.4 1.9 11.4 2.9" fill="none" stroke="#284890" stroke-width="0.9"/><path d="M11.2 2.4V9.8H0.3" fill="none" stroke="#0e2050" stroke-width="1.5"/></svg>
<div class="a t" style="left:67px;top:359.20000000000005px;font-size:9.5px;transform:scaleX(0.825);transform-origin:0 0;">ИНВОЛЮКС</div>
<div class="a" style="left:40px;top:377px;width:10px;height:1px;background:repeating-linear-gradient(90deg,#cacac0 0 1px,transparent 1px 2px);"></div>
<svg style="left:50.5px;top:371.00000000000006px" width="12" height="11" viewBox="0 0 12 11"><path d="M0.5 1.6Q0.5 0.5 1.6 0.5H5.2Q6.4 0.5 7 1.9H10.4Q11.4 1.9 11.4 2.9V9.6H0.5Z" fill="url(#fg)"/><path d="M0.5 9.6V1.6Q0.5 0.5 1.6 0.5H5.2Q6.4 0.5 7 1.9H10.4Q11.4 1.9 11.4 2.9" fill="none" stroke="#284890" stroke-width="0.9"/><path d="M11.2 2.4V9.8H0.3" fill="none" stroke="#0e2050" stroke-width="1.5"/></svg>
<div class="a t" style="left:67px;top:371.80000000000007px;font-size:9.5px;transform:scaleX(0.813);transform-origin:0 0;">КОСТРОМАМЕБЕЛЬ</div>
<div class="a" style="left:40px;top:389px;width:10px;height:1px;background:repeating-linear-gradient(90deg,#cacac0 0 1px,transparent 1px 2px);"></div>
<svg style="left:50.5px;top:383.6px" width="12" height="11" viewBox="0 0 12 11"><path d="M0.5 1.6Q0.5 0.5 1.6 0.5H5.2Q6.4 0.5 7 1.9H10.4Q11.4 1.9 11.4 2.9V9.6H0.5Z" fill="url(#fg)"/><path d="M0.5 9.6V1.6Q0.5 0.5 1.6 0.5H5.2Q6.4 0.5 7 1.9H10.4Q11.4 1.9 11.4 2.9" fill="none" stroke="#284890" stroke-width="0.9"/><path d="M11.2 2.4V9.8H0.3" fill="none" stroke="#0e2050" stroke-width="1.5"/></svg>
<div class="a t" style="left:67px;top:384.40000000000003px;font-size:9.5px;transform:scaleX(0.857);transform-origin:0 0;">ПРАГМАТИКА</div>
<div class="a" style="left:40px;top:402px;width:10px;height:1px;background:repeating-linear-gradient(90deg,#cacac0 0 1px,transparent 1px 2px);"></div>
<svg style="left:50.5px;top:396.2px" width="12" height="11" viewBox="0 0 12 11"><path d="M0.5 1.6Q0.5 0.5 1.6 0.5H5.2Q6.4 0.5 7 1.9H10.4Q11.4 1.9 11.4 2.9V9.6H0.5Z" fill="url(#fg)"/><path d="M0.5 9.6V1.6Q0.5 0.5 1.6 0.5H5.2Q6.4 0.5 7 1.9H10.4Q11.4 1.9 11.4 2.9" fill="none" stroke="#284890" stroke-width="0.9"/><path d="M11.2 2.4V9.8H0.3" fill="none" stroke="#0e2050" stroke-width="1.5"/></svg>
<div class="a t" style="left:67px;top:397.0px;font-size:9.5px;transform:scaleX(0.843);transform-origin:0 0;">РАПИД</div>
<div class="a" style="left:40px;top:414px;width:10px;height:1px;background:repeating-linear-gradient(90deg,#cacac0 0 1px,transparent 1px 2px);"></div>
<svg style="left:50.5px;top:408.8px" width="12" height="11" viewBox="0 0 12 11"><path d="M0.5 1.6Q0.5 0.5 1.6 0.5H5.2Q6.4 0.5 7 1.9H10.4Q11.4 1.9 11.4 2.9V9.6H0.5Z" fill="url(#fg)"/><path d="M0.5 9.6V1.6Q0.5 0.5 1.6 0.5H5.2Q6.4 0.5 7 1.9H10.4Q11.4 1.9 11.4 2.9" fill="none" stroke="#284890" stroke-width="0.9"/><path d="M11.2 2.4V9.8H0.3" fill="none" stroke="#0e2050" stroke-width="1.5"/></svg>
<div class="a t" style="left:67px;top:409.6px;font-size:9.5px;transform:scaleX(0.848);transform-origin:0 0;">СИГЛАН</div>
<div class="a" style="left:3px;top:417.5px;width:186px;height:1px;background:#c8c4b0;"></div>
<div class="a" style="left:3px;top:418.3px;width:186px;height:5px;background:#d5e4da;"></div>
<div class="a" style="left:176.6px;top:131px;width:12.2px;height:286.6px;background:linear-gradient(90deg,#f3f1ea,#fbfaf6 50%,#fefefc);"></div>
<div class="a" style="left:176.79999999999998px;top:131px;width:11.799999999999999px;height:13px;background:linear-gradient(90deg,#ccdafd,#bacbf9 55%,#a8bcf1);border:0.6px solid #e8eefd;border-radius:2px;"></div>
<svg style="left:178.7px;top:134.6px" width="8" height="6" viewBox="0 0 8 6"><path d="M1 4.6L4 1.6L7 4.6" stroke="#40507a" stroke-width="2" fill="none"/></svg>
<div class="a" style="left:176.79999999999998px;top:404.6px;width:11.799999999999999px;height:13px;background:linear-gradient(90deg,#ccdafd,#bacbf9 55%,#a8bcf1);border:0.6px solid #e8eefd;border-radius:2px;"></div>
<svg style="left:178.7px;top:408.20000000000005px" width="8" height="6" viewBox="0 0 8 6"><path d="M1 1.4L4 4.4L7 1.4" stroke="#40507a" stroke-width="2" fill="none"/></svg>
<div class="a" style="left:176.9px;top:145px;width:11.6px;height:183px;background:linear-gradient(90deg,#cad8fd,#bdccf9 55%,#b2c3f4 85%,#cfdafc);border:0.7px solid #e4ebfd;border-bottom:1px solid #9db4ea;border-radius:2px;"></div>
<div class="a" style="left:180.1px;top:234.5px;width:5.199999999999999px;height:1px;background:#eef3ff;"></div>
<div class="a" style="left:180.1px;top:236.5px;width:5.199999999999999px;height:1px;background:#eef3ff;"></div>
<div class="a" style="left:180.1px;top:238.5px;width:5.199999999999999px;height:1px;background:#eef3ff;"></div>
<div class="a" style="left:193px;top:110px;width:553.3px;height:308px;background:#fdfffa;border-top:1px solid #b8bcae;border-left:1px solid #b8bcae;"></div>
<div class="a" style="left:193px;top:110.4px;width:539.5px;height:14px;background:#cdd5c7;border-top:1px solid #e4eadf;"></div>
<div class="a" style="left:201.5px;top:111px;width:1px;height:13.4px;background:#969c8e;"></div>
<div class="a" style="left:268.5px;top:111px;width:1px;height:13.4px;background:#969c8e;"></div>
<div class="a t" style="left:204px;top:113.19999999999999px;font-size:9.5px;transform:scaleX(0.966);transform-origin:0 0;">Артикул</div>
<div class="a" style="left:492.5px;top:111px;width:1px;height:13.4px;background:#969c8e;"></div>
<div class="a t" style="left:271.2px;top:113.19999999999999px;font-size:9.5px;transform:scaleX(0.913);transform-origin:0 0;">Товар</div>
<div class="a" style="left:563.5px;top:111px;width:1px;height:13.4px;background:#969c8e;"></div>
<div class="a t" style="left:496px;top:113.19999999999999px;font-size:9.5px;transform:scaleX(0.902);transform-origin:0 0;">Производитель</div>
<div class="a" style="left:642.7px;top:111px;width:1px;height:13.4px;background:#969c8e;"></div>
<div class="a t" style="left:567px;top:113.19999999999999px;font-size:9.5px;transform:scaleX(0.867);transform-origin:0 0;">Цена</div>
<div class="a" style="left:707.5px;top:111px;width:1px;height:13.4px;background:#969c8e;"></div>
<div class="a t" style="left:645.8px;top:113.19999999999999px;font-size:9.5px;transform:scaleX(0.928);transform-origin:0 0;">Общ. кол-во</div>
<div class="a" style="left:193px;top:124px;width:539.5px;height:0.8px;background:#aab0a2;"></div>
<div class="a" style="left:193px;top:124.85px;width:9.5px;height:128.25px;background:#cdd5c7;"></div>
<div class="a t" style="left:204px;top:127.14999999999999px;font-size:9.5px;transform:scaleX(0.818);transform-origin:0 0;">NN-S</div>
<div class="a t" style="left:271.2px;top:127.14999999999999px;font-size:9.5px;transform:scaleX(0.948);transform-origin:0 0;">Детская гардероб 1дв.</div>
<div class="a t" style="left:496px;top:127.14999999999999px;font-size:9.5px;transform:scaleX(0.816);transform-origin:0 0;">WOODRIGHT</div>
<div class="a t" style="right:109.20000000000005px;top:127.14999999999999px;font-size:9.5px;transform:scaleX(0.898);transform-origin:100% 0;">32 318 р.</div>
<div class="a t" style="right:43.700000000000045px;top:127.14999999999999px;font-size:9.5px;">3</div>
<div class="a" style="left:193px;top:138.5px;width:539px;height:1px;background:#cbcdc3;"></div>
<div class="a" style="left:193px;top:138.5px;width:9.5px;height:1px;background:#a9ad9f;"></div>
<div class="a t" style="left:204px;top:141.39999999999998px;font-size:9.5px;transform:scaleX(0.818);transform-origin:0 0;">NN-S</div>
<div class="a t" style="left:271.2px;top:141.39999999999998px;font-size:9.5px;transform:scaleX(0.939);transform-origin:0 0;">Детская домик игровой с кроватью</div>
<div class="a t" style="left:496px;top:141.39999999999998px;font-size:9.5px;transform:scaleX(0.816);transform-origin:0 0;">WOODRIGHT</div>
<div class="a t" style="right:109.20000000000005px;top:141.39999999999998px;font-size:9.5px;transform:scaleX(0.898);transform-origin:100% 0;">88 816 р.</div>
<div class="a t" style="right:43.700000000000045px;top:141.39999999999998px;font-size:9.5px;">2</div>
<div class="a" style="left:193px;top:152.75px;width:539px;height:1px;background:#cbcdc3;"></div>
<div class="a" style="left:193px;top:152.75px;width:9.5px;height:1px;background:#a9ad9f;"></div>
<div class="a t" style="left:204px;top:155.64999999999998px;font-size:9.5px;transform:scaleX(0.818);transform-origin:0 0;">NN-S</div>
<div class="a t" style="left:271.2px;top:155.64999999999998px;font-size:9.5px;transform:scaleX(0.934);transform-origin:0 0;">Детская комод</div>
<div class="a t" style="left:496px;top:155.64999999999998px;font-size:9.5px;transform:scaleX(0.816);transform-origin:0 0;">WOODRIGHT</div>
<div class="a t" style="right:109.20000000000005px;top:155.64999999999998px;font-size:9.5px;transform:scaleX(0.898);transform-origin:100% 0;">30 909 р.</div>
<div class="a t" style="right:43.700000000000045px;top:155.64999999999998px;font-size:9.5px;">1</div>
<div class="a" style="left:193px;top:167.0px;width:539px;height:1px;background:#cbcdc3;"></div>
<div class="a" style="left:193px;top:167.0px;width:9.5px;height:1px;background:#a9ad9f;"></div>
<div class="a" style="left:269.2px;top:168.2px;width:223.5px;height:13.35px;background:#316ac5;border:1px dotted #c8a458;"></div>
<svg style="left:195.8px;top:170.79999999999998px" width="5" height="8" viewBox="0 0 5 8"><path d="M0 0L5 4L0 8Z" fill="#000"/></svg>
<div class="a t" style="left:204px;top:169.89999999999998px;font-size:9.5px;transform:scaleX(0.818);transform-origin:0 0;">NN-S</div>
<div class="a t" style="left:271.2px;top:169.89999999999998px;font-size:9.5px;color:#fff;transform:scaleX(0.936);transform-origin:0 0;">Детская кроватка младенческая</div>
<div class="a t" style="left:496px;top:169.89999999999998px;font-size:9.5px;transform:scaleX(0.816);transform-origin:0 0;">WOODRIGHT</div>
<div class="a t" style="right:109.20000000000005px;top:169.89999999999998px;font-size:9.5px;transform:scaleX(0.898);transform-origin:100% 0;">18 122 р.</div>
<div class="a t" style="right:43.700000000000045px;top:169.89999999999998px;font-size:9.5px;">4</div>
<div class="a" style="left:193px;top:181.25px;width:539px;height:1px;background:#cbcdc3;"></div>
<div class="a" style="left:193px;top:181.25px;width:9.5px;height:1px;background:#a9ad9f;"></div>
<div class="a t" style="left:204px;top:184.14999999999998px;font-size:9.5px;transform:scaleX(0.818);transform-origin:0 0;">NN-S</div>
<div class="a t" style="left:271.2px;top:184.14999999999998px;font-size:9.5px;transform:scaleX(0.939);transform-origin:0 0;">Детская накладка д/пеленального стола</div>
<div class="a t" style="left:496px;top:184.14999999999998px;font-size:9.5px;transform:scaleX(0.816);transform-origin:0 0;">WOODRIGHT</div>
<div class="a t" style="right:109.20000000000005px;top:184.14999999999998px;font-size:9.5px;transform:scaleX(0.908);transform-origin:100% 0;">2 662 р.</div>
<div class="a t" style="right:43.700000000000045px;top:184.14999999999998px;font-size:9.5px;">1</div>
<div class="a" style="left:193px;top:195.5px;width:539px;height:1px;background:#cbcdc3;"></div>
<div class="a" style="left:193px;top:195.5px;width:9.5px;height:1px;background:#a9ad9f;"></div>
<div class="a t" style="left:204px;top:198.39999999999998px;font-size:9.5px;transform:scaleX(0.818);transform-origin:0 0;">NN-S</div>
<div class="a t" style="left:271.2px;top:198.39999999999998px;font-size:9.5px;transform:scaleX(0.941);transform-origin:0 0;">Детская полка угловая</div>
<div class="a t" style="left:496px;top:198.39999999999998px;font-size:9.5px;transform:scaleX(0.816);transform-origin:0 0;">WOODRIGHT</div>
<div class="a t" style="right:109.20000000000005px;top:198.39999999999998px;font-size:9.5px;transform:scaleX(0.908);transform-origin:100% 0;">6 687 р.</div>
<div class="a t" style="right:43.700000000000045px;top:198.39999999999998px;font-size:9.5px;">4</div>
<div class="a" style="left:193px;top:209.75px;width:539px;height:1px;background:#cbcdc3;"></div>
<div class="a" style="left:193px;top:209.75px;width:9.5px;height:1px;background:#a9ad9f;"></div>
<div class="a t" style="left:204px;top:212.64999999999998px;font-size:9.5px;transform:scaleX(0.818);transform-origin:0 0;">NN-S</div>
<div class="a t" style="left:271.2px;top:212.64999999999998px;font-size:9.5px;transform:scaleX(0.947);transform-origin:0 0;">Детская стул</div>
<div class="a t" style="left:496px;top:212.64999999999998px;font-size:9.5px;transform:scaleX(0.816);transform-origin:0 0;">WOODRIGHT</div>
<div class="a t" style="right:109.20000000000005px;top:212.64999999999998px;font-size:9.5px;transform:scaleX(0.920);transform-origin:100% 0;">&lt;не определена&gt;</div>
<div class="a t" style="right:43.700000000000045px;top:212.64999999999998px;font-size:9.5px;">0</div>
<div class="a" style="left:193px;top:224.0px;width:539px;height:1px;background:#cbcdc3;"></div>
<div class="a" style="left:193px;top:224.0px;width:9.5px;height:1px;background:#a9ad9f;"></div>
<div class="a t" style="left:204px;top:226.89999999999998px;font-size:9.5px;transform:scaleX(0.818);transform-origin:0 0;">NN-S</div>
<div class="a t" style="left:271.2px;top:226.89999999999998px;font-size:9.5px;transform:scaleX(0.947);transform-origin:0 0;">Детская туалетный столик</div>
<div class="a t" style="left:496px;top:226.89999999999998px;font-size:9.5px;transform:scaleX(0.816);transform-origin:0 0;">WOODRIGHT</div>
<div class="a t" style="right:109.20000000000005px;top:226.89999999999998px;font-size:9.5px;transform:scaleX(0.898);transform-origin:100% 0;">20 369 р.</div>
<div class="a t" style="right:43.700000000000045px;top:226.89999999999998px;font-size:9.5px;">1</div>
<div class="a" style="left:193px;top:238.25px;width:539px;height:1px;background:#cbcdc3;"></div>
<div class="a" style="left:193px;top:238.25px;width:9.5px;height:1px;background:#a9ad9f;"></div>
<div class="a t" style="left:204px;top:241.14999999999998px;font-size:9.5px;transform:scaleX(0.866);transform-origin:0 0;">TAM320</div>
<div class="a t" style="left:271.2px;top:241.14999999999998px;font-size:9.5px;transform:scaleX(0.917);transform-origin:0 0;">Детская Camilla детская</div>
<div class="a t" style="left:496px;top:241.14999999999998px;font-size:9.5px;transform:scaleX(0.827);transform-origin:0 0;">PENTA MOBILI</div>
<div class="a t" style="right:109.20000000000005px;top:241.14999999999998px;font-size:9.5px;transform:scaleX(0.870);transform-origin:100% 0;">0 р.</div>
<div class="a t" style="right:43.700000000000045px;top:241.14999999999998px;font-size:9.5px;">1</div>
<div class="a" style="left:193px;top:252.5px;width:539px;height:1px;background:#cbcdc3;"></div>
<div class="a" style="left:193px;top:252.5px;width:9.5px;height:1px;background:#a9ad9f;"></div>
<div class="a" style="left:201.5px;top:124.85px;width:1px;height:128.25px;background:#cbcdc3;"></div>
<div class="a" style="left:268.5px;top:124.85px;width:1px;height:128.25px;background:#cbcdc3;"></div>
<div class="a" style="left:492.5px;top:124.85px;width:1px;height:128.25px;background:#cbcdc3;"></div>
<div class="a" style="left:563.5px;top:124.85px;width:1px;height:128.25px;background:#cbcdc3;"></div>
<div class="a" style="left:642.7px;top:124.85px;width:1px;height:128.25px;background:#cbcdc3;"></div>
<div class="a" style="left:707.5px;top:124.85px;width:1px;height:128.25px;background:#cbcdc3;"></div>
<div class="a" style="left:732.6px;top:111px;width:12.6px;height:306.8px;background:linear-gradient(90deg,#f3f1ea,#fbfaf6 50%,#fefefc);"></div>
<div class="a" style="left:732.8000000000001px;top:111px;width:12.2px;height:13px;background:linear-gradient(90deg,#ccdafd,#bacbf9 55%,#a8bcf1);border:0.6px solid #e8eefd;border-radius:2px;"></div>
<svg style="left:734.9px;top:114.6px" width="8" height="6" viewBox="0 0 8 6"><path d="M1 4.6L4 1.6L7 4.6" stroke="#40507a" stroke-width="2" fill="none"/></svg>
<div class="a" style="left:732.8000000000001px;top:404.8px;width:12.2px;height:13px;background:linear-gradient(90deg,#ccdafd,#bacbf9 55%,#a8bcf1);border:0.6px solid #e8eefd;border-radius:2px;"></div>
<svg style="left:734.9px;top:408.40000000000003px" width="8" height="6" viewBox="0 0 8 6"><path d="M1 1.4L4 4.4L7 1.4" stroke="#40507a" stroke-width="2" fill="none"/></svg>
<div class="a" style="left:732.9px;top:174.5px;width:12.0px;height:147.5px;background:linear-gradient(90deg,#cad8fd,#bdccf9 55%,#b2c3f4 85%,#cfdafc);border:0.7px solid #e4ebfd;border-bottom:1px solid #9db4ea;border-radius:2px;"></div>
<div class="a" style="left:736.1px;top:246.25px;width:5.6px;height:1px;background:#eef3ff;"></div>
<div class="a" style="left:736.1px;top:248.25px;width:5.6px;height:1px;background:#eef3ff;"></div>
<div class="a" style="left:736.1px;top:250.25px;width:5.6px;height:1px;background:#eef3ff;"></div>
<div class="a" style="left:745.8px;top:110.5px;width:1px;height:307.5px;background:#b9bdb0;"></div>
<div class="a" style="left:193px;top:417.8px;width:553.3px;height:0.9px;background:#c4c0ac;"></div>
<div class="a" style="left:3px;top:423px;width:186px;height:165px;background:#fdfffa;border-top:1px solid #b2ae9e;border-left:1px solid #b2ae9e;"></div>
<div class="a" style="left:4px;top:424px;width:172.8px;height:11.7px;background:#ece9d8;"></div>
<svg style="left:7px;top:426.1px" width="9" height="9" viewBox="0 0 9 9"><rect x="0.8" y="0.8" width="7.4" height="7.4" fill="#fff" stroke="#8e8e8a" stroke-width="1.6"/><path d="M3.1 3.3H5.9M3.1 5.7H5.9M4.5 3.3V5.7" stroke="#bcbcb8" stroke-width="0.8"/></svg>
<div class="a t" style="left:20.6px;top:424.00000000000006px;font-size:9.5px;transform:scaleX(0.890);transform-origin:0 0;">Информация о кол-ве</div>
<svg style="left:7px;top:438.1px" width="9" height="9" viewBox="0 0 9 9"><rect x="0.8" y="0.8" width="7.4" height="7.4" fill="#fff" stroke="#8e8e8a" stroke-width="1.6"/><path d="M3.1 3.3H5.9M3.1 5.7H5.9M4.5 3.3V5.7" stroke="#bcbcb8" stroke-width="0.8"/></svg>
<div class="a t" style="left:20.6px;top:436.00000000000006px;font-size:9.5px;transform:scaleX(0.931);transform-origin:0 0;">Детализация остатков и резервов по</div>
<div class="a t" style="left:20.6px;top:446.50000000000006px;font-size:9.5px;transform:scaleX(0.914);transform-origin:0 0;">документам</div>
<svg style="left:7px;top:460.2px" width="9" height="9" viewBox="0 0 9 9"><rect x="0.8" y="0.8" width="7.4" height="7.4" fill="#fff" stroke="#8e8e8a" stroke-width="1.6"/><path d="M3.1 3.3H5.9M3.1 5.7H5.9M4.5 3.3V5.7" stroke="#bcbcb8" stroke-width="0.8"/></svg>
<div class="a t" style="left:20.6px;top:458.1px;font-size:9.5px;transform:scaleX(0.927);transform-origin:0 0;">Складское движение</div>
<svg style="left:7px;top:472.2px" width="9" height="9" viewBox="0 0 9 9"><rect x="0.8" y="0.8" width="7.4" height="7.4" fill="#fff" stroke="#8e8e8a" stroke-width="1.6"/><path d="M3.1 3.3H5.9M3.1 5.7H5.9M4.5 3.3V5.7" stroke="#bcbcb8" stroke-width="0.8"/></svg>
<div class="a t" style="left:20.6px;top:470.1px;font-size:9.5px;transform:scaleX(0.911);transform-origin:0 0;">Оборотная ведомость</div>
<svg style="left:7px;top:484.0px" width="9" height="9" viewBox="0 0 9 9"><rect x="0.8" y="0.8" width="7.4" height="7.4" fill="#fff" stroke="#8e8e8a" stroke-width="1.6"/><path d="M3.1 3.3H5.9M3.1 5.7H5.9M4.5 3.3V5.7" stroke="#bcbcb8" stroke-width="0.8"/></svg>
<div class="a t" style="left:20.6px;top:481.90000000000003px;font-size:9.5px;transform:scaleX(0.919);transform-origin:0 0;">Детализация по документам</div>
<svg style="left:7px;top:495.8px" width="9" height="9" viewBox="0 0 9 9"><rect x="0.8" y="0.8" width="7.4" height="7.4" fill="#fff" stroke="#8e8e8a" stroke-width="1.6"/><path d="M3.1 3.3H5.9M3.1 5.7H5.9M4.5 3.3V5.7" stroke="#bcbcb8" stroke-width="0.8"/></svg>
<div class="a t" style="left:20.6px;top:493.70000000000005px;font-size:9.5px;transform:scaleX(0.909);transform-origin:0 0;">Журнал инвентаризаций</div>
<svg style="left:7px;top:507.7px" width="9" height="9" viewBox="0 0 9 9"><rect x="0.8" y="0.8" width="7.4" height="7.4" fill="#fff" stroke="#8e8e8a" stroke-width="1.6"/><path d="M3.1 3.3H5.9M3.1 5.7H5.9M4.5 3.3V5.7" stroke="#bcbcb8" stroke-width="0.8"/></svg>
<div class="a t" style="left:20.6px;top:505.6px;font-size:9.5px;transform:scaleX(0.923);transform-origin:0 0;">Партии товара</div>
<svg style="left:7px;top:519.4px" width="9" height="9" viewBox="0 0 9 9"><rect x="0.8" y="0.8" width="7.4" height="7.4" fill="#fff" stroke="#8e8e8a" stroke-width="1.6"/><path d="M3.1 3.3H5.9M3.1 5.7H5.9M4.5 3.3V5.7" stroke="#bcbcb8" stroke-width="0.8"/></svg>
<div class="a t" style="left:20.6px;top:517.3000000000001px;font-size:9.5px;transform:scaleX(0.928);transform-origin:0 0;">Неудовлетворенные заказы</div>
<div class="a t" style="left:20.6px;top:527.8000000000001px;font-size:9.5px;transform:scaleX(0.937);transform-origin:0 0;">клиентов</div>
<svg style="left:7px;top:541.8px" width="9" height="9" viewBox="0 0 9 9"><rect x="0.8" y="0.8" width="7.4" height="7.4" fill="#fff" stroke="#8e8e8a" stroke-width="1.6"/><path d="M3.1 3.3H5.9M3.1 5.7H5.9M4.5 3.3V5.7" stroke="#bcbcb8" stroke-width="0.8"/></svg>
<div class="a t" style="left:20.6px;top:539.7px;font-size:9.5px;transform:scaleX(0.909);transform-origin:0 0;">История цен</div>
<svg style="left:7px;top:553.4px" width="9" height="9" viewBox="0 0 9 9"><rect x="0.8" y="0.8" width="7.4" height="7.4" fill="#fff" stroke="#8e8e8a" stroke-width="1.6"/><path d="M3.1 3.3H5.9M3.1 5.7H5.9M4.5 3.3V5.7" stroke="#bcbcb8" stroke-width="0.8"/></svg>
<div class="a t" style="left:20.6px;top:551.3000000000001px;font-size:9.5px;transform:scaleX(0.924);transform-origin:0 0;">Ед.изм./Фасовки</div>
<svg style="left:7px;top:565.1999999999999px" width="9" height="9" viewBox="0 0 9 9"><rect x="0.8" y="0.8" width="7.4" height="7.4" fill="#fff" stroke="#8e8e8a" stroke-width="1.6"/><path d="M3.1 3.3H5.9M3.1 5.7H5.9M4.5 3.3V5.7" stroke="#bcbcb8" stroke-width="0.8"/></svg>
<div class="a t" style="left:20.6px;top:563.1px;font-size:9.5px;transform:scaleX(0.963);transform-origin:0 0;">Коды (штрих-коды)</div>
<svg style="left:7px;top:577.0px" width="9" height="9" viewBox="0 0 9 9"><rect x="0.8" y="0.8" width="7.4" height="7.4" fill="#fff" stroke="#8e8e8a" stroke-width="1.6"/><path d="M3.1 3.3H5.9M3.1 5.7H5.9M4.5 3.3V5.7" stroke="#bcbcb8" stroke-width="0.8"/></svg>
<div class="a t" style="left:20.6px;top:574.9000000000001px;font-size:9.5px;transform:scaleX(0.884);transform-origin:0 0;">Серии</div>
<div class="a" style="left:176.7px;top:423.7px;width:12.1px;height:163.5px;background:linear-gradient(90deg,#f3f1ea,#fbfaf6 50%,#fefefc);"></div>
<div class="a" style="left:176.89999999999998px;top:423.7px;width:11.7px;height:13px;background:linear-gradient(90deg,#ccdafd,#bacbf9 55%,#a8bcf1);border:0.6px solid #e8eefd;border-radius:2px;"></div>
<svg style="left:178.75px;top:427.3px" width="8" height="6" viewBox="0 0 8 6"><path d="M1 4.6L4 1.6L7 4.6" stroke="#40507a" stroke-width="2" fill="none"/></svg>
<div class="a" style="left:176.89999999999998px;top:574.2px;width:11.7px;height:13px;background:linear-gradient(90deg,#ccdafd,#bacbf9 55%,#a8bcf1);border:0.6px solid #e8eefd;border-radius:2px;"></div>
<svg style="left:178.75px;top:577.8000000000001px" width="8" height="6" viewBox="0 0 8 6"><path d="M1 1.4L4 4.4L7 1.4" stroke="#40507a" stroke-width="2" fill="none"/></svg>
<div class="a" style="left:177.0px;top:437.2px;width:11.5px;height:56.80000000000001px;background:linear-gradient(90deg,#cad8fd,#bdccf9 55%,#b2c3f4 85%,#cfdafc);border:0.7px solid #e4ebfd;border-bottom:1px solid #9db4ea;border-radius:2px;"></div>
<div class="a" style="left:180.2px;top:463.6px;width:5.1px;height:1px;background:#eef3ff;"></div>
<div class="a" style="left:180.2px;top:465.6px;width:5.1px;height:1px;background:#eef3ff;"></div>
<div class="a" style="left:180.2px;top:467.6px;width:5.1px;height:1px;background:#eef3ff;"></div>
<div class="a" style="left:3px;top:587.2px;width:186px;height:0.9px;background:#c0bca8;"></div>
<div class="a" style="left:193px;top:423px;width:553px;height:17.8px;background:#006464;"></div>
<div class="a t" style="left:198.2px;top:426.6px;font-size:10.3px;color:#fff;font-weight:bold;text-shadow:0.3px 0 0 #fff;transform:scaleX(0.895);transform-origin:0 0;">Информация о кол-ве</div>
<svg style="left:302.6px;top:431.8px" width="8.5" height="5" viewBox="0 0 9 5"><path d="M0 0H9L4.5 4.6Z" fill="#fff"/></svg>
<div class="a" style="left:193px;top:443.2px;width:330px;height:21.6px;background:linear-gradient(#fdfdf9 0%,#f6f4ea 50%,#ebe8d7 100%);border-bottom:1px solid #cfc9ae;border-right:1px solid #d8d2bc;"></div>
<div class="a" style="left:196.5px;top:447px;width:147px;height:14.5px;background:#fff;border:1.4px solid #d3e0d5;"></div>
<div class="a" style="left:330.5px;top:448px;width:12px;height:12.5px;background:#ece9d8;"></div>
<svg style="left:333.0px;top:452.75px" width="7" height="4" viewBox="0 0 7 4"><path d="M0 0H7L3.5 4Z" fill="#000"/></svg>
<div class="a t" style="left:198.7px;top:448.8px;font-size:9.5px;transform:scaleX(0.900);transform-origin:0 0;">(Все склады)</div>
<div class="a" style="left:346.5px;top:444px;width:1px;height:20px;background:#c5c2b0;"></div>
<div class="a" style="left:347.5px;top:444px;width:1px;height:20px;background:#fff;"></div>
<div class="a" style="left:351.5px;top:445.5px;width:34px;height:17.5px;background:#bccbf0;border:1px solid #7d94d4;"></div>
<div class="a t" style="left:355px;top:450.1px;font-size:9.5px;transform:scaleX(0.916);transform-origin:0 0;">Склад</div>
<div class="a t" style="left:389.2px;top:450.1px;font-size:9.5px;transform:scaleX(0.892);transform-origin:0 0;">Фасовка</div>
<div class="a t" style="left:431.6px;top:450.1px;font-size:9.5px;transform:scaleX(0.882);transform-origin:0 0;">Серия</div>
<div class="a t" style="left:464.4px;top:450.1px;font-size:9.5px;transform:scaleX(0.922);transform-origin:0 0;">Партия</div>
<div class="a" style="left:501px;top:446px;width:1px;height:16px;background:#c5c2b0;"></div>
<div class="a" style="left:502px;top:446px;width:1px;height:16px;background:#fff;"></div>
<div class="a t" style="left:508px;top:450.1px;font-size:9.5px;transform:scaleX(0.867);transform-origin:0 0;">X</div>
<div class="a" style="left:193px;top:468px;width:553px;height:106.7px;background:#fdfffa;border:1px solid #c0bcae;"></div>
<div class="a" style="left:194px;top:469px;width:342.5px;height:14.5px;background:#d0d4c4;border:1px solid #202020;"></div>
<div class="a" style="left:203.0px;top:469px;width:1px;height:14.5px;background:#202020;"></div>
<div class="a t" style="left:206px;top:471.5px;font-size:9.5px;transform:scaleX(0.895);transform-origin:0 0;">Склад</div>
<div class="a" style="left:347.5px;top:469px;width:1px;height:14.5px;background:#202020;"></div>
<div class="a t" style="left:350.4px;top:471.5px;font-size:9.5px;transform:scaleX(0.898);transform-origin:0 0;">Ож.прих.</div>
<div class="a" style="left:398.3px;top:469px;width:1px;height:14.5px;background:#202020;"></div>
<div class="a t" style="left:400.7px;top:471.5px;font-size:9.5px;transform:scaleX(0.924);transform-origin:0 0;">Кол-во</div>
<div class="a" style="left:448.1px;top:469px;width:1px;height:14.5px;background:#202020;"></div>
<div class="a t" style="left:450.4px;top:471.5px;font-size:9.5px;transform:scaleX(0.878);transform-origin:0 0;">Резерв</div>
<div class="a" style="left:488.5px;top:469px;width:1px;height:14.5px;background:#202020;"></div>
<div class="a t" style="left:490.9px;top:471.5px;font-size:9.5px;transform:scaleX(0.929);transform-origin:0 0;">Кол.-Рез.</div>
<div class="a" style="left:197.8px;top:473.0px;width:3.4px;height:1.5px;background:#333;"></div>
<div class="a" style="left:196.4px;top:473.0px;width:1px;height:1.5px;background:#333;"></div>
<div class="a" style="left:197.8px;top:475.6px;width:3.4px;height:1.5px;background:#333;"></div>
<div class="a" style="left:196.4px;top:475.6px;width:1px;height:1.5px;background:#333;"></div>
<div class="a" style="left:197.8px;top:478.2px;width:3.4px;height:1.5px;background:#333;"></div>
<div class="a" style="left:196.4px;top:478.2px;width:1px;height:1.5px;background:#333;"></div>
<div class="a" style="left:194px;top:483.5px;width:9.5px;height:14.1px;background:#d0d4c4;border-left:1px solid #202020;border-right:1px solid #202020;border-bottom:1px solid #202020;"></div>
<div class="a" style="left:203.5px;top:483.5px;width:144.5px;height:13.6px;background:#ece9d8;"></div>
<svg style="left:196.5px;top:486.5px" width="5" height="8" viewBox="0 0 5 8"><path d="M0 0L5 4L0 8Z" fill="#000"/></svg>
<div class="a t" style="left:204.2px;top:485.8px;font-size:9.5px;transform:scaleX(0.907);transform-origin:0 0;">Воронеж (образцы)</div>
<div class="a t" style="right:353.2px;top:485.8px;font-size:9.5px;">0</div>
<div class="a t" style="right:304px;top:485.8px;font-size:9.5px;">1</div>
<div class="a t" style="right:262.4px;top:485.8px;font-size:9.5px;">0</div>
<div class="a t" style="right:216px;top:485.8px;font-size:9.5px;">1</div>
<div class="a" style="left:203.5px;top:497.1px;width:333px;height:1px;background:#cbcdc3;"></div>
<div class="a" style="left:194px;top:497.6px;width:9.5px;height:14.1px;background:#d0d4c4;border-left:1px solid #202020;border-right:1px solid #202020;border-bottom:1px solid #202020;"></div>
<div class="a t" style="left:204.2px;top:499.90000000000003px;font-size:9.5px;transform:scaleX(0.922);transform-origin:0 0;">Москва(склад-мебельная студия)</div>
<div class="a t" style="right:353.2px;top:499.90000000000003px;font-size:9.5px;">0</div>
<div class="a t" style="right:304px;top:499.90000000000003px;font-size:9.5px;">3</div>
<div class="a t" style="right:262.4px;top:499.90000000000003px;font-size:9.5px;">0</div>
<div class="a t" style="right:216px;top:499.90000000000003px;font-size:9.5px;">3</div>
<div class="a" style="left:203.5px;top:511.20000000000005px;width:333px;height:1px;background:#cbcdc3;"></div>
<div class="a" style="left:347.5px;top:483.5px;width:1px;height:28.2px;background:#cbcdc3;"></div>
<div class="a" style="left:398.3px;top:483.5px;width:1px;height:28.2px;background:#cbcdc3;"></div>
<div class="a" style="left:448.1px;top:483.5px;width:1px;height:28.2px;background:#cbcdc3;"></div>
<div class="a" style="left:488.5px;top:483.5px;width:1px;height:28.2px;background:#cbcdc3;"></div>
<div class="a" style="left:535.7px;top:483.5px;width:1px;height:28.2px;background:#cbcdc3;"></div>
<div class="a" style="left:194px;top:554.3px;width:343.5px;height:18.6px;background:#ece9d8;border:1px solid #c4c0ac;"></div>
<div class="a" style="left:194px;top:554.3px;width:9.5px;height:18.6px;background:#d0d4c4;"></div>
<div class="a" style="left:349.5px;top:557px;width:47.80000000000001px;height:14px;background:#efecdd;border:1px solid #b8b4a0;border-radius:1.5px;"></div>
<div class="a t" style="right:354.9px;top:559.1px;font-size:9.5px;">0</div>
<div class="a" style="left:400.3px;top:557px;width:46.80000000000001px;height:14px;background:#efecdd;border:1px solid #b8b4a0;border-radius:1.5px;"></div>
<div class="a t" style="right:305.7px;top:559.1px;font-size:9.5px;">4</div>
<div class="a" style="left:450.1px;top:557px;width:37.39999999999998px;height:14px;background:#efecdd;border:1px solid #b8b4a0;border-radius:1.5px;"></div>
<div class="a t" style="right:264.09999999999997px;top:559.1px;font-size:9.5px;">0</div>
<div class="a" style="left:490.5px;top:557px;width:44.200000000000045px;height:14px;background:#efecdd;border:1px solid #b8b4a0;border-radius:1.5px;"></div>
<div class="a t" style="right:217.70000000000005px;top:559.1px;font-size:9.5px;">4</div>
<div class="a" style="left:193px;top:574.7px;width:554px;height:13.8px;background:#ffffe1;"></div>
<div class="a t" style="left:194.6px;top:576.4px;font-size:9.5px;transform:scaleX(0.983);transform-origin:0 0;"><b>Всего [сч.]</b></div>
<div class="a t" style="left:248px;top:576.4px;font-size:9.5px;transform:scaleX(0.963);transform-origin:0 0;">Ож.прих.:</div>
<div class="a t" style="left:291.7px;top:576.4px;font-size:9.5px;transform:scaleX(1.090);transform-origin:0 0;"><b>0 [0]</b></div>
<div class="a t" style="left:317.6px;top:576.4px;font-size:9.5px;transform:scaleX(0.960);transform-origin:0 0;">Кол-во:</div>
<div class="a t" style="left:351.2px;top:576.4px;font-size:9.5px;transform:scaleX(0.963);transform-origin:0 0;"><b>4</b></div>
<div class="a t" style="left:360.9px;top:576.4px;font-size:9.5px;transform:scaleX(0.899);transform-origin:0 0;">Резерв:</div>
<div class="a t" style="left:394.2px;top:576.4px;font-size:9.5px;transform:scaleX(1.085);transform-origin:0 0;"><b>0 [0]</b></div>
<div class="a t" style="left:420px;top:576.4px;font-size:9.5px;transform:scaleX(0.981);transform-origin:0 0;">Кол.-Рез.:</div>
<div class="a t" style="left:463.8px;top:576.4px;font-size:9.5px;transform:scaleX(1.019);transform-origin:0 0;"><b>4</b></div>
</div>
</body></html>
